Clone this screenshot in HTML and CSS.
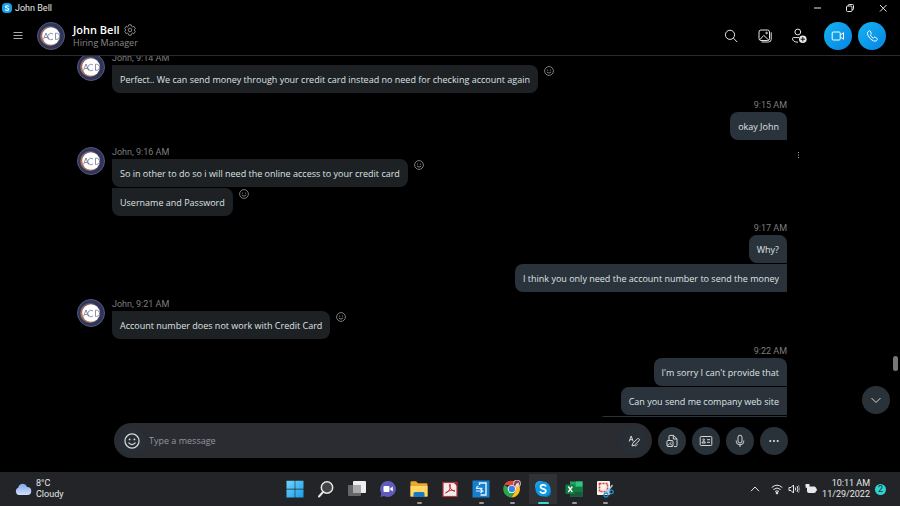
FILE: index.html
```html
<!DOCTYPE html>
<html lang="en">
<head>
<meta charset="utf-8">
<title>John Bell</title>
<link rel="stylesheet" href="styles.css">
</head>
<body>
<svg class="defs" aria-hidden="true">
  <defs>
    <linearGradient id="ring" x1="0" y1="1" x2="1" y2="0"><stop offset="0" stop-color="#b5744a"/><stop offset=".5" stop-color="#8d6a63"/><stop offset="1" stop-color="#4a4a6e"/></linearGradient>
    <linearGradient id="sky" x1="0" y1="0" x2="1" y2="1"><stop offset="0" stop-color="#6fd6fb"/><stop offset="1" stop-color="#1b9be9"/></linearGradient>
    <linearGradient id="cloud" x1="0" y1="0" x2="0" y2="1"><stop offset="0" stop-color="#7fa8ec"/><stop offset="1" stop-color="#d3e0fb"/></linearGradient>
    <symbol id="avatar" viewBox="0 0 28 28">
      <circle cx="14" cy="14" r="13.5" fill="#30355a" stroke="#53587a"/>
      <circle cx="13.200" cy="14" r="10" fill="url(#ring)"/>
      <circle cx="14" cy="14" r="8.800" fill="#fff"/>
      <path d="M6.500 17.500 9 11l2.500 6.500M7.500 15.500h3M16 12a3.200 3.200 0 1 0 0 5M18.500 11.200v6.200h1c4 0 4-6.200 0-6.200z" fill="none" stroke="#5c6285" stroke-width=".7"/>
    </symbol>
    <symbol id="smile" viewBox="0 0 10 10">
      <circle cx="5" cy="5" r="4.400" fill="none" stroke="currentColor" stroke-width=".8"/>
      <circle cx="3.500" cy="4" r=".6" fill="currentColor"/><circle cx="6.500" cy="4" r=".6" fill="currentColor"/>
      <path d="M2.800 6q2.200 2.400 4.400 0" fill="none" stroke="currentColor" stroke-width=".8"/>
    </symbol>
  </defs>
</svg>

<header class="titlebar">
  <svg class="i10" viewBox="0 0 10 10"><rect width="10" height="10" rx="4" fill="#16a4e8"/><path d="M6.700 3.500C6 2.300 3.500 2.500 3.500 3.800c0 1.600 3.200.8 3.200 2.400 0 1.400-2.700 1.600-3.400.2" fill="none" stroke="#fff" stroke-width="1.100"/></svg>
  <span class="title">John Bell</span>
  <button class="win" aria-label="Minimize"><svg class="i10" viewBox="0 0 10 10"><path d="M2 5h7"/></svg></button>
  <button class="win" aria-label="Restore"><svg class="i10" viewBox="0 0 10 10"><rect x="1.500" y="3" width="5.500" height="5.500" rx="1"/><path d="M3.200 3V2.500q0-1 1-1h3.300q1 0 1 1v3.300q0 1-1 1H7"/></svg></button>
  <button class="win" aria-label="Close"><svg class="i10" viewBox="0 0 10 10"><path d="m2 2 6.500 6.500m0-6.500L2 8.500"/></svg></button>
</header>

<section class="head">
  <button class="icon menu" aria-label="Menu"><svg class="i10" viewBox="0 0 10 10"><path d="M.5 1.500h9M.5 4.500h9M.5 7.500h9"/></svg></button>
  <svg class="avatar"><use href="#avatar"/></svg>
  <div class="who">
    <h1>John Bell <button class="icon gear" aria-label="Settings"><svg class="i12" viewBox="0 0 12 12"><path d="M4.800.8h2.400l.4 1.500 1 .6L10 2.400l1.300 2.100L10.200 6l1.100 1.500L10 9.600l-1.400-.5-1 .6-.4 1.500H4.800l-.4-1.500-1-.6-1.400.5L.7 7.500 1.800 6 .7 4.500 2 2.400l1.400.5 1-.6z"/><circle cx="6" cy="6" r="1.800"/></svg></button></h1>
    <p>Hiring Manager</p>
  </div>
  <div class="tools">
    <button class="icon" aria-label="Search"><svg class="i14" viewBox="0 0 14 14"><circle cx="6" cy="5.800" r="4.600"/><path d="m9.400 9.200 3.800 3.800"/></svg></button>
    <button class="icon" aria-label="Gallery"><svg class="i14" viewBox="0 0 14 14"><rect x="1" y="1" width="10.500" height="10.500" rx="2"/><path d="M3.500 13h7q2.700 0 2.700-2.700v-7M1.600 10.800l4.200-4.400 5 4.800"/><circle cx="8.600" cy="4" r=".8"/></svg></button>
    <button class="icon" aria-label="Add people"><svg class="i16" viewBox="0 0 16 16"><circle cx="6.800" cy="4" r="2.900"/><path d="M8 9.600H2.400q-.9 0-.9.900c0 2.400 2 3.700 5.500 3.700"/><circle cx="11.800" cy="11.200" r="3.800" fill="#e8e8e8" stroke="none"/><path d="M11.800 9v4.400M9.600 11.200H14" stroke="#111"/></svg></button>
  </div>
  <div class="calls">
    <button class="call" aria-label="Video call"><svg class="i14" viewBox="0 0 14 14"><rect x="1.200" y="3" width="8" height="8" rx="1"/><path d="m9.200 6.200 3.300-2.500v6.600L9.200 7.800"/></svg></button>
    <button class="call" aria-label="Audio call"><svg class="i14" viewBox="0 0 14 14"><path d="M4.200 1.800 2.700 3c-.9 1.600.5 4.400 2.500 6.500 2.200 2.200 4.800 3.300 6.200 2.300l.9-1.200c.3-.5 0-.9-.4-1.200L10.300 8.300c-.5-.3-1-.2-1.400.2l-.6.700C7 8.500 6 7.300 5.400 6.100l.6-.6c.4-.4.400-.8.2-1.200L5.300 2.100c-.2-.5-.7-.6-1.100-.3z"/></svg></button>
  </div>
</section>

<main class="chat">
  <div class="list">
    <article class="group">
      <svg class="avatar"><use href="#avatar"/></svg>
      <div class="body"><span class="meta">John, 9:14 AM</span>
        <div class="line"><p class="bubble">Perfect.. We can send money through your credit card instead no need for checking account again</p><button class="react" aria-label="React"><svg class="i10"><use href="#smile"/></svg></button></div></div>
    </article>
    <article class="group mine">
      <div class="body"><span class="meta">9:15 AM</span><p class="bubble">okay John</p></div>
    </article>
    <article class="group">
      <svg class="avatar"><use href="#avatar"/></svg>
      <div class="body"><span class="meta">John, 9:16 AM</span>
        <div class="line"><p class="bubble">So in other to do so i will need the online access to your credit card</p><button class="react" aria-label="React"><svg class="i10"><use href="#smile"/></svg></button></div>
        <div class="line"><p class="bubble">Username and Password</p><button class="react" aria-label="React"><svg class="i10"><use href="#smile"/></svg></button></div></div>
      <button class="more" aria-label="More options"><svg class="i10" viewBox="0 0 10 10"><path d="M5.500 2v1M5.500 4.500v1M5.500 7v1"/></svg></button>
    </article>
    <article class="group mine">
      <div class="body"><span class="meta">9:17 AM</span><p class="bubble">Why?</p><p class="bubble">I think you only need the account number to send the money</p></div>
    </article>
    <article class="group">
      <svg class="avatar"><use href="#avatar"/></svg>
      <div class="body"><span class="meta">John, 9:21 AM</span>
        <div class="line"><p class="bubble">Account number does not work with Credit Card</p><button class="react" aria-label="React"><svg class="i10"><use href="#smile"/></svg></button></div></div>
    </article>
    <article class="group mine">
      <div class="body"><span class="meta">9:22 AM</span><p class="bubble">I'm sorry I can't provide that</p><p class="bubble">Can you send me company web site</p><p class="bubble next"></p></div>
    </article>
  </div>
  <span class="thumb"></span>
  <button class="round down" aria-label="Scroll to latest"><svg class="i12" viewBox="0 0 12 12"><path d="m1.500 4 4.500 4.500L10.500 4"/></svg></button>
</main>

<form class="composer">
  <div class="field">
    <button type="button" class="inner" aria-label="Emoji"><svg class="i16"><use href="#smile"/></svg></button>
    <input type="text" placeholder="Type a message" aria-label="Type a message">
    <button type="button" class="inner" aria-label="Format"><svg class="i12" viewBox="0 0 12 12"><path d="M1.200 6.500 3.200 1l2 5.500M1.900 4.700h2.600M4 11l.7-2.700 4.700-4.500q1.200-.7 1.900.3.400.9-.3 1.700L6.400 10.200zM6.400 10.300q1.200 1.300 2.200 0l1-1"/></svg></button>
  </div>
  <button type="button" class="round" aria-label="Add files"><svg class="i14" viewBox="0 0 14 14"><path d="M4 6V2.500Q4 1.400 5 1.400h3.500l3.500 3.400v6.700q0 1.100-1 1.100H9M8.300 1.500V5h3.500"/><rect x="2" y="6.500" width="6" height="6" rx="1"/><path d="m2.300 12 2.600-2.600L7.700 12M5.500 8.300h1"/></svg></button>
  <button type="button" class="round" aria-label="Send contacts"><svg class="i14" viewBox="0 0 14 14"><rect x="1.200" y="2.500" width="11.600" height="9" rx="1"/><path d="M8 5.700h3M8 8.300h3M3 9q0-1.500 1.700-1.500T6.400 9z"/><circle cx="4.700" cy="5.700" r=".8"/></svg></button>
  <button type="button" class="round" aria-label="Record message"><svg class="i14" viewBox="0 0 14 14"><rect x="5" y="1.200" width="4" height="7.800" rx="2"/><path d="M3.200 6.500v.7q0 3.600 3.800 3.600t3.800-3.600v-.7M7 10.800V13"/></svg></button>
  <button type="button" class="round" aria-label="More"><svg class="i14" viewBox="0 0 14 14"><g fill="currentColor" stroke="none"><circle cx="3.300" cy="7" r="1.100"/><circle cx="7" cy="7" r="1.100"/><circle cx="10.700" cy="7" r="1.100"/></g></svg></button>
</form>

<footer class="taskbar">
  <div class="weather">
    <svg class="i18" viewBox="0 0 18 18"><path d="M4.500 15a4 4 0 0 1-.2-7.500C5.200 2.800 11.500 2.600 13 7a4 4 0 0 1 .5 8z" fill="url(#cloud)"/></svg>
    <p>8°C<br>Cloudy</p>
  </div>
  <nav class="apps">
    <button class="app" aria-label="Start"><svg class="i18" viewBox="0 0 18 18"><path d="M.5.800h8.200v8H.5zM9.300.800h8.200v8H9.300zM.5 9.400h8.200v8H.5zM9.300 9.400h8.200v8H9.300z" fill="url(#sky)"/></svg></button>
    <button class="app" aria-label="Search"><svg class="i18" viewBox="0 0 18 18"><circle cx="10" cy="7.500" r="5.700" fill="#444" stroke="#e8e8e8" stroke-width="1.500"/><path d="m6 12-4 4.500" stroke="#e8e8e8" stroke-width="2" stroke-linecap="round"/></svg></button>
    <button class="app" aria-label="Task view"><svg class="i18" viewBox="0 0 18 18"><rect x="5" y="1" width="13" height="12" rx="1" fill="#eee"/><rect x="0" y="5" width="13" height="11" rx="1" fill="#666"/><path d="M5 5h8v8H5z" fill="#aaa"/></svg></button>
    <button class="app" aria-label="Chat"><svg class="i18" viewBox="0 0 18 18"><path d="M9 1a8 8 0 1 1-4 15l-3.500 1 .8-3.800A8 8 0 0 1 9 1z" fill="#625bbd"/><rect x="4.500" y="6" width="6" height="6" rx="1" fill="#fff"/><path d="m11.200 8.500 2.600-2v5l-2.600-2z" fill="#fff"/></svg></button>
    <button class="app open" aria-label="File Explorer"><svg class="i18" viewBox="0 0 18 18"><path d="M.5 2.500q0-1.200 1.200-1.200H6l2 2h8.300q1.200 0 1.200 1.200v12H.5z" fill="#e9a92d"/><path d="M.5 6h17v10.500H.5z" fill="#ffd766"/><path d="M3.500 17v-3.500q0-1.500 1.500-1.500h8q1.500 0 1.500 1.500V17z" fill="#1979c2"/></svg></button>
    <button class="app" aria-label="PDF reader"><svg class="i18" viewBox="0 0 18 18"><rect x="2" y="2.500" width="14" height="14" fill="#eee" stroke="#b23a3e" stroke-width="1.200"/><path d="M4.500 13C9 11.500 10 7 9 4c-1.800 1 .5 6.800 5 7.200-2-2-7-.5-9.500 1.800z" fill="none" stroke="#c4282e" stroke-width="1"/><path d="M13 3h3v3z" fill="#9d2025"/></svg></button>
    <button class="app open" aria-label="Remote app"><svg class="i18" viewBox="0 0 18 18"><rect x=".5" y=".5" width="17" height="17" fill="#147fd0"/><path d="M7.500 5V3H14v12H8.500" fill="none" stroke="#e4f4ff" stroke-width="1.400"/><path d="M10.500 8.300H4.500q0-1.800 2-2.300M4 11h6.500l-2-2M10.500 11l-2 2" fill="none" stroke="#e4f4ff" stroke-width="1.200"/></svg></button>
    <button class="app open" aria-label="Chrome"><svg class="i18" viewBox="0 0 18 18"><path d="M1.200 5A8.500 8.500 0 0 1 16 5H9z" fill="#e94335"/><path d="M1.200 5A8.500 8.500 0 0 0 8.500 17.500L12.500 11 9 9z" fill="#2da44f"/><path d="M16 5a8.500 8.500 0 0 1-7.500 12.500L12.500 11 11.500 5z" fill="#fbc116"/><circle cx="8.800" cy="9" r="4.100" fill="#fff"/><circle cx="8.800" cy="9" r="3.200" fill="#3b82e8"/><circle cx="14" cy="3.600" r="3.900" fill="#e3c5c6"/><path d="M11 6q-.5-5.500 3-5.500 4 0 3 5.500-1-1-1.300-3.500-2.500 0-3 3z" fill="#7a4450"/><path d="M12.800 4h2.600v2.500h-2.600z" fill="#f0d3c9"/></svg></button>
    <button class="app active" aria-label="Skype"><svg class="i18" viewBox="0 0 18 18"><circle cx="6" cy="6" r="5" fill="#25a9ec"/><circle cx="12" cy="12" r="5" fill="#087bd3"/><circle cx="9" cy="9" r="7.600" fill="#1097e3"/><path d="M12 6.500C11 4 6.500 4.400 6.500 6.800 6.500 9.600 11.800 8.200 11.800 11c0 2.600-4.800 2.900-5.800.3" fill="none" stroke="#fff" stroke-width="1.700"/></svg></button>
    <button class="app open" aria-label="Excel"><svg class="i18" viewBox="0 0 18 18"><path d="M5 1.500h12.500v15H5z" fill="#21a366"/><path d="M5 6.500h12.500v5H5z" fill="#107c41"/><path d="M5 11.500h12.500v5H5z" fill="#185c37"/><path d="M11 1.500h6.500v5H11z" fill="#33c481"/><rect x=".5" y="4.500" width="9.500" height="9.500" rx="1" fill="#107c41"/><path d="m3.300 6.500 4 5.500m0-5.500-4 5.500" stroke="#fff" stroke-width="1.300"/></svg></button>
    <button class="app open" aria-label="Snipping Tool"><svg class="i18" viewBox="0 0 18 18"><rect x="1" y="1" width="13" height="14" rx="1" fill="#f5f2f0"/><rect x="3.500" y="3.500" width="8" height="8" fill="none" stroke="#d3432f" stroke-width="1.600" stroke-dasharray="2 1"/><path d="m16.500 5-6 8m-1-4 5 5" stroke="#a8cfe5" stroke-width="1.400"/><circle cx="10" cy="15" r="2" fill="none" stroke="#2389c9" stroke-width="1.300"/><circle cx="15.500" cy="12" r="1.800" fill="none" stroke="#2389c9" stroke-width="1.300"/></svg></button>
  </nav>
  <div class="tray">
    <svg class="i10" viewBox="0 0 10 10"><path d="M1 7.200 5 3l4 4.200"/></svg>
    <div class="status">
      <svg class="i12" viewBox="0 0 12 12"><path d="M.7 4.500q5.300-4.600 10.600 0M2.400 6.500q3.600-3 7.200 0M4.100 8.500q1.900-1.500 3.800 0"/><circle cx="6" cy="10" r=".9" fill="currentColor"/></svg>
      <svg class="i12" viewBox="0 0 12 12"><path d="M1 4.500h2L5.500 2v8L3 7.500H1zM7.300 4.500q1 1.500 0 3M9 3q2 3 0 6"/><path d="M10.500 2q2 4 0 8" opacity=".5"/></svg>
      <svg class="i12" viewBox="0 0 12 12"><rect x="2.500" y="4" width="8" height="5.500" rx="1" fill="currentColor"/><path d="M11.300 5.500v2.500"/><path d="M.5 1h4v3q0 1-2 1t-2-1z" fill="currentColor" stroke="none"/></svg>
    </div>
    <p class="clock">10:11 AM<br>11/29/2022</p>
    <span class="badge">2</span>
  </div>
</footer>
</body>
</html>
```
FILE: styles.css
```css
* { box-sizing: border-box; }
h1, p { margin: 0; font-weight: 400; }
button { display: grid; place-items: center; padding: 0; border: 0; background: none; color: inherit; font: inherit; }
svg { display: block; flex: none; fill: none; stroke: currentColor; stroke-width: 1; }
use { stroke: none; }
.defs { position: absolute; width: 0; height: 0; }
.i10 { width: 10px; height: 10px; }
.i12 { width: 12px; height: 12px; }
.i14 { width: 14px; height: 14px; }
.i16 { width: 16px; height: 16px; }
.i18 { width: 18px; height: 18px; }

body {
  margin: 0;
  height: 100vh;
  display: flex;
  flex-direction: column;
  overflow: hidden;
  background: #000;
  color: #e6e6e6;
  font: 9px/14px "Open Sans", "Noto Sans", sans-serif;
}

.titlebar, .meta, .taskbar { font-family: Roboto, "Open Sans", sans-serif; font-size: 9px; }

.titlebar { display: flex; align-items: center; height: 16px; padding: 0 2px; gap: 3px; }
.titlebar svg { stroke: none; }
.titlebar .win svg { stroke: currentColor; }
.title { flex: 1; }
.win { width: 30px; height: 16px; }

.head { display: flex; align-items: center; height: 40px; padding: 0 14px 0 13px; border-bottom: 1px solid #2b2b2b; }
.menu { margin-right: 14px; color: #aaa; }
.avatar { width: 28px; height: 28px; }
.who { flex: 1; margin-left: 8px; padding-top: 1px; color: #8a8a8a; line-height: 13px; }
.who h1 { display: flex; align-items: center; gap: 4px; color: #fff; font-size: 11px; font-weight: 600; line-height: 13px; }
.gear { color: #8a8a8a; }
.tools { display: flex; gap: 18px; margin-right: 17px; }
.tools .icon { width: 16px; height: 16px; }
.calls { display: flex; gap: 6px; }
.call { width: 28px; height: 28px; border-radius: 50%; background: linear-gradient(135deg, #16b3f2, #0584e2); color: #fff; }

.chat { position: relative; flex: 1; min-height: 0; overflow: hidden; }
.list { display: flex; flex-direction: column; gap: 5px; margin-top: -5px; padding: 0 92px 0 77px; }
.group { display: grid; grid-template-columns: 28px 1fr 21px; }
.group .avatar { margin-top: 2px; }
.body { grid-column: 2; display: flex; flex-direction: column; gap: 1px; margin-left: 7px; align-items: flex-start; }
.mine .body { align-items: flex-end; }
.meta { height: 13px; color: #7e7e7e; line-height: 15px; }
.line { display: flex; gap: 6px; }
.bubble { min-height: 28px; padding: 8px 8px 6px; border-radius: 0 8px 8px 8px; background: #1d2124; color: #dfe2e4; }
.line + .line .bubble { border-top-left-radius: 0; }
.mine .bubble { border-radius: 8px 8px 0 8px; background: #2a333b; }
.mine .bubble + .bubble { border-top-right-radius: 0; }
.bubble.next { width: 190px; }
.react { align-self: flex-start; margin-top: 1px; color: #999; }
.more { width: 21px; height: 20px; color: #aaa; }
.thumb { position: absolute; right: 2px; bottom: 46px; width: 5px; height: 15px; border-radius: 3px; background: #777; }
.round { width: 28px; height: 28px; border-radius: 50%; background: #293139; color: #d5d8da; }
.down { position: absolute; right: 10px; bottom: 3px; }

.composer { display: flex; align-items: center; gap: 6px; height: 55px; padding: 0 112px 8px 114px; }
.field { flex: 1; display: flex; align-items: center; height: 35px; padding: 0 4px; border-radius: 18px; background: #2b2c31; }
.inner { width: 28px; height: 28px; border-radius: 50%; background: #272e36; color: #d5d8da; }
.field input { flex: 1; min-width: 0; padding: 0 3px; border: 0; outline: 0; background: none; color: #fff; font: inherit; }
.field input::placeholder { color: #95969a; opacity: 1; }

.taskbar { display: grid; grid-template-columns: 1fr auto 1fr; align-items: center; height: 34px; background: #222427; color: #e8e8e8; line-height: 11px; }
.weather { display: flex; align-items: center; gap: 4px; padding-left: 14px; }
.apps { display: flex; }
.apps svg, .weather svg { stroke: none; }
.app { position: relative; width: 31px; height: 34px; }
.active { background: linear-gradient(#303236, #303236) center / 28px 30px no-repeat; }
.open::after, .active::after { content: ""; position: absolute; left: 13px; bottom: 2px; width: 5px; height: 2px; border-radius: 1px; background: #999; }
.active::after { left: 10px; width: 11px; background: #3fd5d8; }
.tray { display: flex; align-items: center; justify-content: flex-end; padding-right: 14px; }
.status { display: flex; gap: 5px; margin: 0 5px 0 11px; }
.clock { text-align: right; }
.badge { width: 11px; height: 11px; margin-left: 5px; border-radius: 50%; background: #2fd4cf; color: #134; text-align: center; }
```
